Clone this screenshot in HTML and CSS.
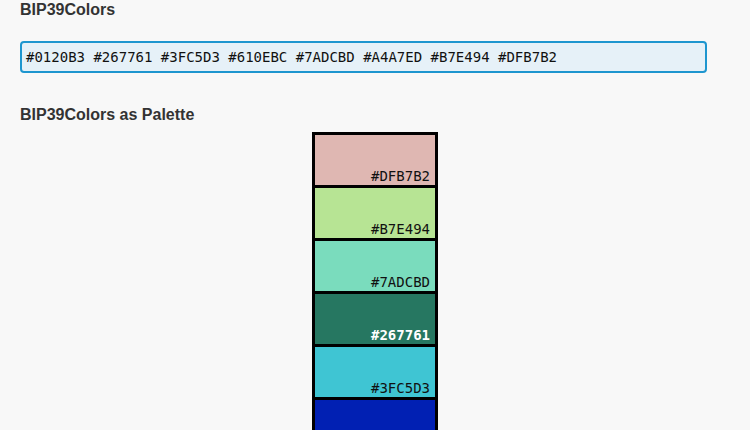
FILE: index.html
```html
<!DOCTYPE html>
<html>
<head>
<meta charset="utf-8">
<link rel="stylesheet" href="styles.css">
</head>
<body>
<main class="page">
  <h2 class="title">BIP39Colors</h2>
  <div class="field">#0120B3 #267761 #3FC5D3 #610EBC #7ADCBD #A4A7ED #B7E494 #DFB7B2</div>
  <h2 class="title title-palette">BIP39Colors as Palette</h2>
  <div class="palette-wrap">
    <div class="palette">
      <div class="swatch" style="background:#DFB7B2"><span class="label">#DFB7B2</span></div>
      <div class="swatch" style="background:#B7E494"><span class="label">#B7E494</span></div>
      <div class="swatch" style="background:#7ADCBD"><span class="label">#7ADCBD</span></div>
      <div class="swatch dark" style="background:#267761"><span class="label">#267761</span></div>
      <div class="swatch" style="background:#3FC5D3"><span class="label">#3FC5D3</span></div>
      <div class="swatch dark" style="background:#0120B3"><span class="label">#0120B3</span></div>
      <div class="swatch" style="background:#A4A7ED"><span class="label">#A4A7ED</span></div>
      <div class="swatch dark" style="background:#610EBC"><span class="label">#610EBC</span></div>
    </div>
  </div>
</main>
</body>
</html>
```

FILE: styles.css
```css
html, body {
  margin: 0;
  padding: 0;
  background: #f8f8f8;
}

.page {
  padding: 0 20px;
  font-family: "Liberation Sans", Arial, sans-serif;
  color: #333;
}

.title {
  margin: 0;
  font-size: 16px;
  line-height: 20px;
  font-weight: bold;
  color: #333;
}

.field {
  margin-top: 21px;
  height: 28px;
  width: 679px;
  box-sizing: content-box;
  border: 2px solid #1e96cf;
  border-radius: 4px;
  background: #e6f1f8;
  padding: 0 0 0 4px;
  font-family: "DejaVu Sans Mono", monospace;
  font-size: 14px;
  line-height: 28px;
  color: #111;
  white-space: nowrap;
}

.title-palette {
  margin-top: 32px;
}

.palette-wrap {
  display: flex;
  justify-content: center;
  margin-top: 7px;
}

.palette {
  display: flex;
  flex-direction: column;
  gap: 3px;
  padding: 3px;
  background: #000;
  width: 120px;
}

.swatch {
  box-sizing: border-box;
  height: 50px;
  display: flex;
  align-items: flex-end;
  justify-content: flex-end;
  padding: 0 5px 0 0;
  font-family: "DejaVu Sans Mono", monospace;
  font-size: 14px;
  line-height: 17px;
  color: #111;
}

.swatch.dark {
  color: #fff;
  font-weight: bold;
}
```
